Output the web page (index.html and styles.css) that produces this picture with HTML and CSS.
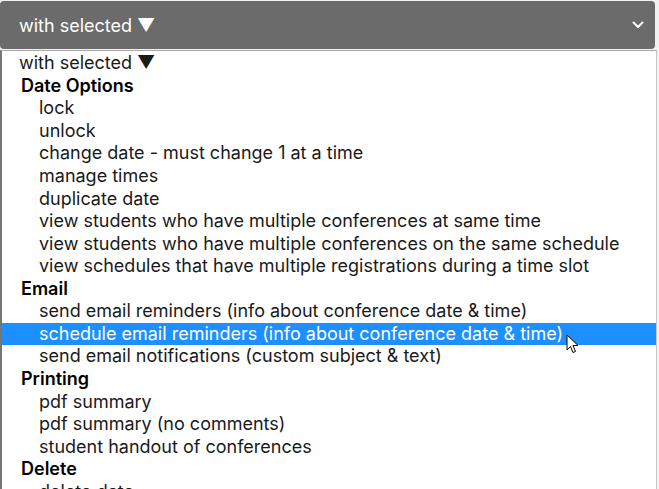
FILE: index.html
```html
<!DOCTYPE html>
<html>
<head>
<meta charset="utf-8">
<link rel="stylesheet" href="styles.css">
</head>
<body>
<div class="page">
  <div class="select">
    <span class="select-label">with selected ▼</span>
    <svg class="chevron" width="12" height="8" viewBox="0 0 12 8"><path d="M1.5 1.5 L6 6 L10.5 1.5" fill="none" stroke="#fff" stroke-width="2" stroke-linecap="round" stroke-linejoin="round"/></svg>
  </div>
  <div class="list">
    <div class="row first">with selected ▼</div>
    <div class="row group">Date Options</div>
    <div class="row opt">lock</div>
    <div class="row opt">unlock</div>
    <div class="row opt">change date - must change 1 at a time</div>
    <div class="row opt">manage times</div>
    <div class="row opt">duplicate date</div>
    <div class="row opt">view students who have multiple conferences at same time</div>
    <div class="row opt">view students who have multiple conferences on the same schedule</div>
    <div class="row opt">view schedules that have multiple registrations during a time slot</div>
    <div class="row group">Email</div>
    <div class="row opt">send email reminders (info about conference date &amp; time)</div>
    <div class="row opt active">schedule email reminders (info about conference date &amp; time)</div>
    <div class="row opt">send email notifications (custom subject &amp; text)</div>
    <div class="row group">Printing</div>
    <div class="row opt">pdf summary</div>
    <div class="row opt">pdf summary (no comments)</div>
    <div class="row opt">student handout of conferences</div>
    <div class="row group">Delete</div>
    <div class="row opt">delete date</div>
  </div>
  <svg class="cursor" width="14" height="21" viewBox="0 0 14 21"><path d="M1 1 L1 16 L4.5 12.5 L7 18.5 L9.5 17.5 L7 11.5 L12 11.5 Z" fill="#fff" stroke="#000" stroke-width="1" stroke-linejoin="miter"/></svg>
</div>
</body>
</html>
```
FILE: styles.css
```css
html, body {
  margin: 0;
  padding: 0;
  background: #f2f2f2;
  overflow: hidden;
}
.page {
  position: relative;
  width: 659px;
  height: 489px;
  overflow: hidden;
  font-family: Inter, "Liberation Sans", sans-serif;
}
.select {
  margin-top: 1px;
  width: 655px;
  height: 48px;
  box-sizing: border-box;
  background: #6b6b6b;
  border-radius: 4px;
  display: flex;
  align-items: center;
  justify-content: space-between;
  padding: 0 11px 0 19px;
  color: #fff;
  font-size: 18px;
}
.select-label {
  position: relative;
  top: 0;
}
.chevron {
  display: block;
}
.list {
  margin-top: 1px;
  width: 657px;
  height: 460px;
  box-sizing: border-box;
  background: #fff;
  border-top: 1px solid #a8a8a8;
  border-left: 2px solid #767676;
  border-right: 1px solid #c8c8c8;
  padding-top: 1.3px;
  font-size: 18px;
  color: #1a1a1a;
}
.row {
  height: 22.56px;
  line-height: 22.56px;
  white-space: nowrap;
}
.first {
  padding-left: 17px;
}
.group {
  padding-left: 19px;
  font-weight: 600;
  color: #000;
}
.opt {
  padding-left: 37px;
}
.active {
  background: #1e8fff;
  color: #fff;
}
.cursor {
  position: absolute;
  left: 566px;
  top: 334px;
}
```
